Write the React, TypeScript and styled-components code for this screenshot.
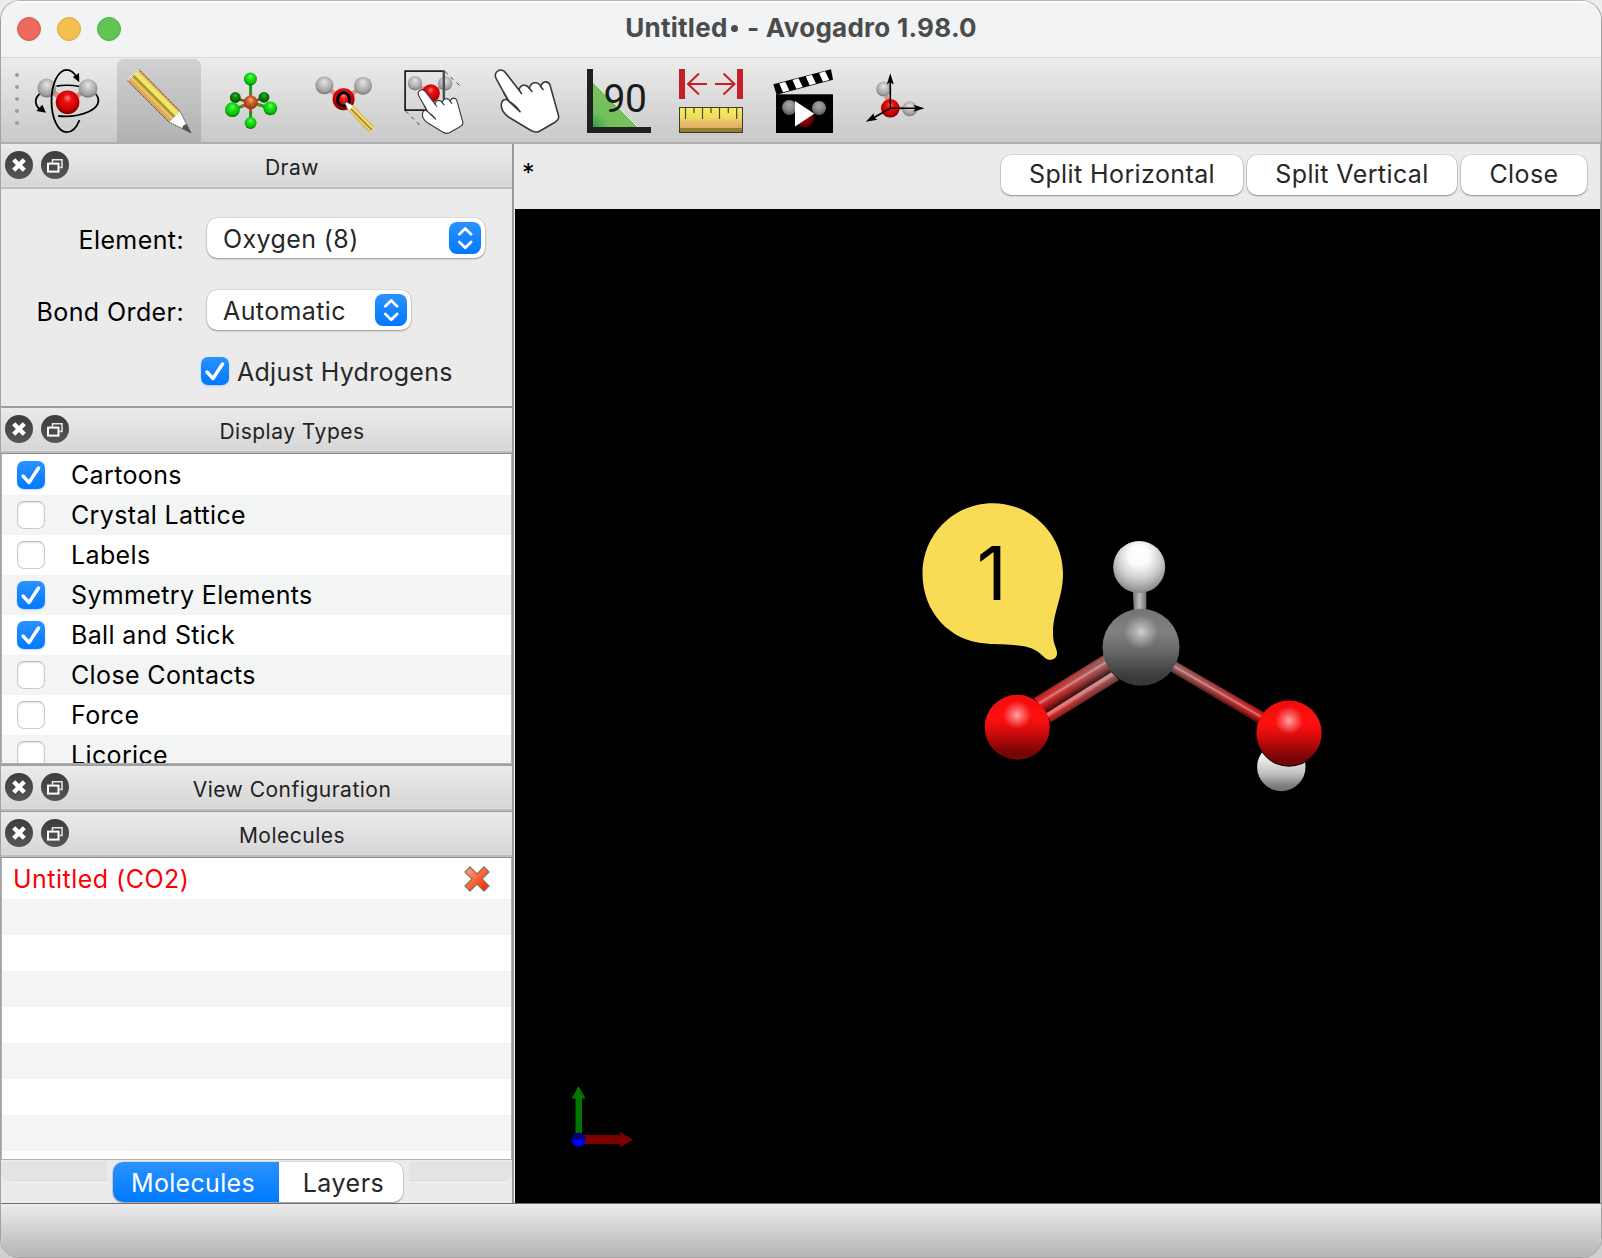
import React from 'react';
import styled, { createGlobalStyle, css } from 'styled-components';

const Global = createGlobalStyle`
  * { box-sizing: border-box; }
  body { margin: 0; background: #e6e6e6; }
`;

/* ---------- window chrome ---------- */

const Desktop = styled.div`
  width: 1602px;
  height: 1258px;
  background: linear-gradient(#ededed, #cfcfcf);
  font-family: Inter, "Liberation Sans", sans-serif;
  font-size: 25px;
  letter-spacing: 0.4px;
  line-height: 1.2;
  color: #000;
  white-space: nowrap;
`;

const AppWindow = styled.div`
  width: 1602px;
  height: 1258px;
  border: 1px solid #a3a3a3;
  border-top-color: #b5b5b7;
  border-radius: 20px;
  overflow: hidden;
  display: flex;
  flex-direction: column;
  background: #ebebeb;
`;

const TitleBar = styled.header`
  position: relative;
  height: 57px;
  flex: none;
  display: flex;
  align-items: center;
  justify-content: center;
  background: #f1f3f5;
  border-top: 2px solid #fafbfc;
  border-bottom: 1px solid #d6d8d9;
  padding-bottom: 5px;
`;

const TrafficLights = styled.div`
  position: absolute;
  left: 16px;
  top: 14px;
  display: flex;
  gap: 16px;
`;

const Light = styled.span<{ $fill: string; $edge: string }>`
  width: 24px;
  height: 24px;
  border-radius: 50%;
  background: ${(p) => p.$fill};
  border: 1px solid ${(p) => p.$edge};
`;

const WindowTitle = styled.h1`
  margin: 0;
  font-size: 26px;
  font-weight: 700;
  letter-spacing: 0.27px;
  color: #4a4c4c;
`;

const Dot = styled.span`
  display: inline-block;
  width: 7px;
  height: 7px;
  margin: 0 3px 5px 3px;
  border-radius: 50%;
  background: #4a4c4c;
  color: transparent;
  font-size: 5px;
  line-height: 7px;
  vertical-align: baseline;
  overflow: hidden;
`;

/* ---------- toolbar ---------- */

const Toolbar = styled.nav`
  height: 86px;
  flex: none;
  display: flex;
  align-items: stretch;
  padding-top: 1px;
  background: linear-gradient(#ececec, #c9c9c9);
  border-bottom: 2px solid #adadad;
`;

const Grip = styled.div`
  width: 24px;
  display: flex;
  flex-direction: column;
  align-items: center;
  gap: 8px;
  padding: 14px 0 0 8px;
`;

const GripDot = styled.i`
  width: 4px;
  height: 4px;
  border-radius: 50%;
  background: #9c9c9c;
`;

const Tool = styled.button<{ $active?: boolean }>`
  width: 84px;
  margin-right: 8px;
  padding: 10px 0 0;
  border: 0;
  display: flex;
  justify-content: center;
  align-items: flex-start;
  background: none;
  ${(p) =>
    p.$active &&
    css`
      border-radius: 7px 7px 0 0;
      background: linear-gradient(#d1d1d1, #b1b1b1);
    `}
  svg {
    display: block;
    overflow: visible;
  }
`;

/* ---------- layout ---------- */

const Body = styled.div`
  flex: 1;
  display: flex;
  min-height: 0;
`;

const Sidebar = styled.aside`
  width: 513px;
  flex: none;
  display: flex;
  flex-direction: column;
  border-right: 2px solid #9a9a9c;
`;

const DockHeader = styled.div`
  height: 45px;
  flex: none;
  display: flex;
  align-items: flex-start;
  gap: 8px;
  padding: 7px 0 0 4px;
  background: linear-gradient(#ebebeb, #d6d6d6);
  border-bottom: 2px solid #bebebe;
  box-shadow: inset 0 -1px 0 #dcdcdc;
`;

const DockTitle = styled.h2`
  flex: 1;
  margin: 4px 0 0 -5px;
  text-align: center;
  font-size: 21px;
  line-height: 26px;
  font-weight: 400;
  letter-spacing: 0.5px;
  color: #222;
`;

const DockButton = styled.button`
  width: 28px;
  height: 28px;
  padding: 0;
  border: 0;
  border-radius: 50%;
  background: linear-gradient(#3c3c3c, #565656);
  svg {
    display: block;
  }
`;

/* ---------- draw form ---------- */

const DrawForm = styled.div`
  height: 219px;
  flex: none;
  display: grid;
  grid-template-columns: 183px auto;
  grid-template-rows: 40px 40px 28px;
  column-gap: 23px;
  row-gap: 32px;
  align-items: center;
  justify-content: start;
  padding-top: 29px;
  border-bottom: 2px solid #9d9d9d;
`;

const FieldLabel = styled.label`
  justify-self: end;
  padding-top: 3px;
`;

const blue = 'linear-gradient(#2b92ff, #0079ff)';

const Combo = styled.div<{ $width: number }>`
  width: ${(p) => p.$width}px;
  height: 40px;
  display: flex;
  align-items: center;
  justify-content: space-between;
  padding: 0 4px 0 16px;
  border-radius: 10px;
  background: #fff;
  color: #272727;
  box-shadow: 0 0 0 0.5px rgba(0, 0, 0, 0.12), 0 1px 2px rgba(0, 0, 0, 0.32);
`;

const ComboValue = styled.span`
  padding-top: 2px;
`;

const Stepper = styled.span`
  width: 32px;
  height: 32px;
  border-radius: 8px;
  background: ${blue};
  svg {
    display: block;
  }
`;

const CheckField = styled.label`
  grid-column: 2;
  display: flex;
  align-items: center;
  gap: 9px;
  margin: -10px 0 0 -6px;
  letter-spacing: 0.28px;
  color: #272727;
`;

const CheckText = styled.span`
  padding-top: 2px;
  margin-left: -1px;
`;

const CheckBox = styled.span<{ $on?: boolean }>`
  width: 28px;
  height: 28px;
  flex: none;
  border-radius: 7px;
  ${(p) =>
    p.$on
      ? css`
          background: ${blue};
          box-shadow: 0 1px 2px rgba(0, 100, 255, 0.25);
        `
      : css`
          background: #fff;
          border: 1px solid #cbcbcb;
          border-top-color: #b9b9b9;
          box-shadow: inset 0 1px 2px rgba(0, 0, 0, 0.12);
        `}
  svg {
    display: block;
  }
`;

/* ---------- lists ---------- */

const ListBox = styled.ul<{ $height: number }>`
  height: ${(p) => p.$height}px;
  flex: none;
  margin: 0;
  padding: 1px 0 0;
  list-style: none;
  overflow: hidden;
  background: #fff;
  border: 1px solid #b0b0b0;
  border-top-color: #8c8c8c;
`;

const TypeRow = styled.li`
  height: 40px;
  display: flex;
  align-items: center;
  gap: 26px;
  padding-left: 15px;
  letter-spacing: 0.36px;
  &:nth-child(even) {
    background: #f3f5f5;
  }
`;

const ListEdge = styled.div`
  height: 2px;
  flex: none;
  background: #a0a0a0;
`;

const HeaderGap = styled.div`
  height: 1px;
  flex: none;
  background: #9a9a9a;
`;

const MoleculeRow = styled.li`
  height: 36px;
  display: flex;
  align-items: center;
  justify-content: space-between;
  padding: 0 21px 0 11px;
  color: #fb0007;
  &:first-child {
    height: 40px;
    letter-spacing: 0.48px;
  }
  &:nth-child(even) {
    background: #f3f5f5;
  }
`;

/* ---------- tabs ---------- */

const TabStrip = styled.div`
  height: 43px;
  display: flex;
  align-items: flex-start;
  padding-top: 1px;
`;

const StripEnd = styled.div<{ $side: 'left' | 'right' }>`
  flex: ${(p) => (p.$side === 'left' ? '0 0 106px' : '1')};
  height: 20px;
  background: #e4e4e4;
  border-bottom: 1px solid #d9d9d9;
  border-radius: ${(p) => (p.$side === 'left' ? '0 0 0 10px' : '0 0 10px 0')};
`;

const Segmented = styled.div`
  display: flex;
  height: 40px;
  margin: 1px 6px 0;
  border-radius: 10px;
  background: #fff;
  box-shadow: 0 0 0 0.5px rgba(0, 0, 0, 0.12), 0 1px 2px rgba(0, 0, 0, 0.32);
`;

const Segment = styled.button<{ $active?: boolean; $width: number }>`
  width: ${(p) => p.$width}px;
  padding: ${(p) => (p.$active ? '2px 6px 0 0' : '2px 0 0 5px')};
  border: 0;
  font: inherit;
  letter-spacing: ${(p) => (p.$active ? '0.3px' : '0.5px')};
  color: ${(p) => (p.$active ? '#fff' : '#272727')};
  background: ${(p) => (p.$active ? blue : 'none')};
  border-radius: ${(p) => (p.$active ? '10px 0 0 10px' : '0 10px 10px 0')};
`;

/* ---------- view ---------- */

const MainView = styled.main`
  flex: 1;
  display: flex;
  flex-direction: column;
  min-width: 0;
  border-left: 1px solid #f2f2f2;
  border-right: 1px solid #b4b4b4;
`;

const ViewBar = styled.div`
  height: 65px;
  flex: none;
  display: flex;
  align-items: flex-start;
  gap: 4px;
  padding: 11px 13px 0 7px;
`;

const ModifiedMark = styled.span`
  flex: 1;
  color: #000;
  line-height: 36px;
`;

const PushButton = styled.button<{ $width: number }>`
  width: ${(p) => p.$width}px;
  height: 40px;
  padding: 0 0 2px;
  border: 0;
  border-radius: 10px;
  background: #fff;
  font: inherit;
  letter-spacing: 0.4px;
  color: #272727;
  box-shadow: 0 0 0 0.5px rgba(0, 0, 0, 0.14), 0 1px 2px rgba(0, 0, 0, 0.34);
`;

const Canvas3D = styled.svg`
  display: block;
  flex: none;
  width: 1085px;
  height: 994px;
  background: #000;
`;

const StatusBar = styled.footer`
  height: 54px;
  flex: none;
  border-top: 1px solid #6f6f6f;
  background: linear-gradient(#ececec, #b5b5b5);
`;

const SharedPaints = styled.svg`
  position: absolute;
  width: 0;
  height: 0;
`;

/* ---------- drawings ---------- */

const Shade = ({ id, stops }: { id: string; stops: [number, string][] }) => (
  <radialGradient id={id} cx="0.5" cy="0.42" r="0.6" fx="0.5" fy="0.3">
    {stops.map(([o, c]) => (
      <stop key={o} offset={o} stopColor={c} />
    ))}
  </radialGradient>
);

const Defs = () => (
  <SharedPaints aria-hidden>
    <defs>
      <Shade id="white" stops={[[0, '#e6e6e6'], [0.35, '#c6c6c6'], [0.75, '#a2a2a2'], [1, '#6c6c6c']]} />
      <Shade id="red" stops={[[0, '#ff8585'], [0.3, '#ee1111'], [0.7, '#cc0000'], [1, '#6e0000']]} />
      <Shade id="darkred" stops={[[0, '#a01010'], [0.7, '#7a0000'], [1, '#4a0000']]} />
      <Shade id="gray" stops={[[0, '#a8a8a8'], [0.6, '#868686'], [1, '#525252']]} />
      <Shade id="green" stops={[[0, '#8dff8d'], [0.3, '#1bea1b'], [0.7, '#0cc40c'], [1, '#056c05']]} />
      <Shade id="darkgreen" stops={[[0, '#3fae3f'], [0.4, '#078c07'], [1, '#034203']]} />
      <Shade id="brown" stops={[[0, '#ffb088'], [0.4, '#d0632d'], [1, '#7c3211']]} />
      <linearGradient id="wood" gradientUnits="userSpaceOnUse" x1="12" y1="0" x2="0.5" y2="11.5">
        <stop offset="0" stopColor="#d9a35a" />
        <stop offset="0.12" stopColor="#e0b05c" />
        <stop offset="0.2" stopColor="#f3ea66" />
        <stop offset="0.44" stopColor="#efe460" />
        <stop offset="0.5" stopColor="#948534" />
        <stop offset="0.6" stopColor="#b9a544" />
        <stop offset="0.7" stopColor="#efd15e" />
        <stop offset="0.78" stopColor="#e6b062" />
        <stop offset="1" stopColor="#d8a258" />
      </linearGradient>
      <linearGradient id="ruler" x1="0" y1="0" x2="0" y2="1">
        <stop offset="0" stopColor="#f4ee62" />
        <stop offset="0.4" stopColor="#eedc60" />
        <stop offset="0.6" stopColor="#e8bd68" />
        <stop offset="0.82" stopColor="#e2ae62" />
        <stop offset="0.83" stopColor="#8f812f" />
        <stop offset="1" stopColor="#8f812f" />
      </linearGradient>
      <radialGradient id="angle" cx="0" cy="1" r="0.75">
        <stop offset="0" stopColor="#2b9c4c" />
        <stop offset="0.45" stopColor="#72bf5b" />
        <stop offset="1" stopColor="#76c15c" />
      </radialGradient>
    </defs>
  </SharedPaints>
);

const Icon = ({ children }: { children: React.ReactNode }) => (
  <svg width="64" height="64" viewBox="0 0 64 64" fill="none">
    {children}
  </svg>
);

const Ball = ({ x, y, r, k }: { x: number; y: number; r: number; k: string }) => (
  <circle cx={x} cy={y} r={r} fill={`url(#${k})`} />
);

const NavigateIcon = () => (
  <Icon>
    <path d="M14 21L29 30" stroke="#d98a8a" strokeWidth="5" />
    <path d="M51 21L37 30" stroke="#d98a8a" strokeWidth="5" />
    <Ball x={11.8} y={19} r={9.4} k="white" />
    <path d="M21.5 17.2Q32 15.2 45 17.5" stroke="#000" strokeWidth="1.7" />
    <Ball x={53} y={19.3} r={9.4} k="white" />
    <Ball x={32.6} y={33.3} r={11.8} k="red" />
    <path d="M44.5 51C41.5 59 36.5 63.2 31.8 63.2C23.2 63.2 16.5 49.5 16.5 32C16.5 14.5 23.2 .8 31.8 .8C36 .8 39 3.5 41.5 8" stroke="#000" strokeWidth="1.8" />
    <path d="M44.3 13.2L37.8 8L44 4Z" fill="#000" />
    <path d="M60.8 25C66.5 32 62.5 39 53 43C45 46.5 34 48 23.2 47" stroke="#000" strokeWidth="1.8" />
    <path d="M4.5 25C-.5 29.5 -.5 35.5 4.5 40" stroke="#000" strokeWidth="1.8" />
    <path d="M11 43.7L1.3 42L7.300 35.800Z" fill="#000" />
  </Icon>
);

const DrawIcon = () => (
  <Icon>
    <path d="M53 42.3L42 53L63.8 63.8Z" fill="#fff" />
    <path d="M55.3 59.6Q55 56 59.5 55.3L63.8 63.8Z" fill="#555" />
    <path d="M12 .3L53 42.3L42 53L.3 11.5Z" fill="url(#wood)" />
    <path d="M12 .3L53 42.3L63.8 63.8L42 53L.3 11.5Z" stroke="#222" strokeWidth="0.8" strokeDasharray="1.5 0.8" />
    <path d="M12 .3L.3 11.5" stroke="#fff" strokeWidth="1.5" />
    <path d="M12 .3L.3 11.5" stroke="#444" strokeWidth="0.6" strokeDasharray="1.5 1" />
  </Icon>
);

const TemplateIcon = () => (
  <Icon>
    <path d="M31.6 14V28" stroke="#12a012" strokeWidth="3" />
    <path d="M31.6 24V45" stroke="#b5532a" strokeWidth="3" />
    <path d="M31.6 43V50" stroke="#12a012" strokeWidth="3" />
    <path d="M18 30L31 33M45 29L32 33" stroke="#8a4a20" strokeWidth="2.5" />
    <Ball x={16.3} y={28.5} r={5.4} k="darkgreen" />
    <Ball x={45} y={28.3} r={5.4} k="darkgreen" />
    <path d="M14 40.5L24 37" stroke="#10b010" strokeWidth="3.2" />
    <path d="M23 37.3L32 33.5L41 36" stroke="#c45a2a" strokeWidth="3.2" />
    <path d="M40 35.7L50 39" stroke="#10b010" strokeWidth="3.2" />
    <Ball x={31.4} y={10} r={6.5} k="green" />
    <Ball x={31.6} y={54} r={5.9} k="green" />
    <Ball x={31.7} y={33.4} r={7} k="brown" />
    <Ball x={13.4} y={40.7} r={7.4} k="green" />
    <Ball x={51.3} y={39.3} r={6.9} k="green" />
  </Icon>
);

const LabelIcon = () => (
  <Icon>
    <path d="M15 18L28 28M50 18L37 28" stroke="#dc8f8f" strokeWidth="4.5" />
    <Ball x={13.4} y={16.3} r={9} k="white" />
    <Ball x={52} y={16.7} r={9} k="white" />
    <Ball x={32.6} y={30.3} r={11} k="red" />
    <ellipse cx="32.6" cy="30.5" rx="6" ry="6.7" stroke="#000" strokeWidth="3.1" />
    <path d="M32.8 31.5L42.6 37.2L37.8 42.3Z" fill="#fff" stroke="#999" strokeWidth="0.5" />
    <path d="M32.8 31.5L35.6 33.1L34.3 34.6Z" fill="#222" />
    <path d="M42.6 37.2L63.3 58L58 63.3L37.8 42.3Z" fill="#e0a858" />
    <path d="M41.3 38.7L62 59.4" stroke="#f3e65f" strokeWidth="2" />
    <path d="M40 40L60.8 60.8" stroke="#8d7f33" strokeWidth="1.2" />
    <path d="M38.9 41.1L59.5 62" stroke="#efd860" strokeWidth="1.5" />
  </Icon>
);

const Hand = () => (
  <>
    <path
      d="M13.3 31.7L1.3 9.8C-2.5 2.5 6.5 -2.2 10.8 4L24 21C25.2 15.5 31 14.5 34.3 19.2C36 12.5 43 12 45.7 17.5C47.5 11.5 53.3 11.7 55 16L63.5 46.5C64.2 49.5 63 51.2 60.8 52.7L44.5 62.2C41.5 63.6 38.5 63 35.5 61.3L13.5 48C9 44.5 6.3 41.5 6.3 36.8C6.3 30.5 10 29.2 13.3 31.7Z"
      fill="#fff"
      stroke="#3a3a3a"
      strokeWidth="1.6"
      strokeLinejoin="round"
    />
    <path d="M9 24L13.300 31.700C17.5 34.5 22 38 25 42.7L13.300 31.700M13.3 31.7L25 42.7M24 21L26.5 24.5M34.3 19.2L37 22.5M45.7 17.5L48 20.5" stroke="#3a3a3a" strokeWidth="1.6" strokeLinecap="round" strokeLinejoin="round" />
  </>
);

const SelectIcon = () => (
  <Icon>
    <path d="M42 2.5L57.5 17.5M2.5 42L17 56.5" stroke="#444" strokeWidth="1" strokeDasharray="4 4" />
    <path d="M13 15L27 24M41 15L30 24" stroke="#dc8f8f" strokeWidth="3.5" />
    <Ball x={12} y={14.2} r={7.2} k="white" />
    <Ball x={42.2} y={14.5} r={7.2} k="white" />
    <Ball x={27.8} y={24.3} r={9} k="red" />
    <rect x="2.1" y="2.1" width="38.8" height="39" stroke="#000" strokeWidth="1.5" />
    <path d="M40.8 2V30" stroke="#555" strokeWidth="2.6" opacity="0.8" />
    <g transform="translate(15 20) scale(0.705)">
      <Hand />
    </g>
  </Icon>
);

const ManipulateIcon = () => (
  <Icon>
    <Hand />
  </Icon>
);

const AngleIcon = () => (
  <Icon>
    <path d="M6 13L51.5 58.5H6Z" fill="url(#angle)" />
    <path d="M6 13L51.5 58.5" stroke="#f4f7f0" strokeWidth="1" />
    <path d="M3 0V61H64" stroke="#231f20" strokeWidth="6" />
    <text x="16.5" y="43" fontFamily="Roboto, sans-serif" fontSize="39" letterSpacing="-0.5" fill="#1c1c1c">90</text>
  </Icon>
);

const MeasureIcon = () => (
  <Icon>
    <path d="M3 0V30M61 0V30" stroke="#c4202b" strokeWidth="6" />
    <path d="M28 15H9M20 4.5L9 15L20 25.5M36 15H55M44.5 4.5L55.5 15L44.5 25.5" stroke="#c4202b" strokeWidth="2" />
    <rect x="0.5" y="38.5" width="63" height="25" fill="url(#ruler)" stroke="#3d3d2c" strokeWidth="1" />
    <path d="M6.5 38.5V50M23.5 38.5V50M40.5 38.5V50M57.7 38.5V50M15 38.5V44M32 38.5V44M49.3 38.5V44" stroke="#4a4520" strokeWidth="1.2" />
  </Icon>
);

const AnimationIcon = () => (
  <Icon>
    <rect x="5" y="25.3" width="57" height="38.7" fill="#000" />
    <path d="M2.3 15.3L60 .3L62 10.8L5.5 25.8Z" fill="#000" />
    <path d="M8.2 14.4L14.2 12.8L18.4 21.6L12 23.3ZM21.5 10.9L27.5 9.3L31.7 18.1L25.3 19.8ZM34.8 7.4L40.8 5.8L45 14.6L38.6 16.3ZM48.1 3.9L54.1 2.3L58.3 11.1L51.9 12.8Z" fill="#fff" />
    <Ball x={18.4} y={38.5} r={7.4} k="gray" />
    <Ball x={48} y={39} r={7.1} k="gray" />
    <Ball x={33.3} y={49} r={9.5} k="darkred" />
    <path d="M24 32V57.5L43.3 44.7Z" fill="#fff" />
  </Icon>
);

const AlignIcon = () => (
  <Icon>
    <Ball x={20.7} y={20} r={7.5} k="white" />
    <path d="M23 27L26 33" stroke="#e08a8a" strokeWidth="4.5" />
    <path d="M35 39.3H42" stroke="#d98a8a" strokeWidth="3.5" />
    <Ball x={46.7} y={39.8} r={7.5} k="white" />
    <Ball x={27.3} y={39.3} r={9.3} k="red" />
    <path d="M27.3 39.3V9M27.3 39.3H56M27.3 39.3L8 50.3" stroke="#000" strokeWidth="1.6" />
    <path d="M27.3 4.3L30.8 15.5L27.3 13.2L23.8 15.5ZM61.5 39.3L50.5 42.8L52.8 39.3L50.5 35.8ZM2.8 52.8L10.7 44.3L11 48.6L14.5 50.8Z" fill="#000" />
  </Icon>
);

const CloseGlyph = () => (
  <svg width="28" height="28" viewBox="0 0 28 28">
    <path d="M8.700 8.700L19.300 19.300M19.300 8.700L8.700 19.300" stroke="#fff" strokeWidth="4.4" />
  </svg>
);

const FloatGlyph = () => (
  <svg width="28" height="28" viewBox="0 0 28 28" fill="none">
    <path d="M11.5 12V8.8H21V16.5H18.5" stroke="#e8e8e8" strokeWidth="1.5" />
    <rect x="7" y="12.6" width="10.5" height="8" fill="#4a4a4a" stroke="#fff" strokeWidth="2" />
  </svg>
);

const CheckGlyph = () => (
  <svg width="28" height="28" viewBox="0 0 28 28" fill="none">
    <path d="M6 15L12 21.5L21.5 7" stroke="#fff" strokeWidth="3.4" strokeLinecap="round" strokeLinejoin="round" />
  </svg>
);

const ArrowsGlyph = () => (
  <svg width="32" height="32" viewBox="0 0 32 32" fill="none">
    <path d="M10.3 12.3L16.2 6.5L22.1 12.3M10.3 20L16.2 25.8L22.1 20" stroke="#fff" strokeWidth="2.7" strokeLinecap="round" strokeLinejoin="round" />
  </svg>
);

const RemoveGlyph = () => (
  <svg width="26" height="26" viewBox="0 0 26 26">
    <defs>
      <linearGradient id="remove" x1="0" y1="0" x2="1" y2="1">
        <stop offset="0.15" stopColor="#ff9478" />
        <stop offset="0.5" stopColor="#ff6236" />
        <stop offset="0.85" stopColor="#ff2d00" />
      </linearGradient>
    </defs>
    <path d="M6 1L13 8L20 1L25 6L18 13L25 20L20 25L13 18L6 25L1 20L8 13L1 6Z" fill="url(#remove)" stroke="#83775a" strokeWidth="1.3" />
  </svg>
);

const Molecule = () => (
  <Canvas3D viewBox="515 209 1085 994">
    <defs>
      <radialGradient id="mH" cx="0.5" cy="0.38" r="0.68" fx="0.5" fy="0.22">
        <stop offset="0" stopColor="#fff" />
        <stop offset="0.3" stopColor="#fbfbfb" />
        <stop offset="0.6" stopColor="#cfcfcf" />
        <stop offset="0.85" stopColor="#999" />
        <stop offset="1" stopColor="#707070" />
      </radialGradient>
      <linearGradient id="mH2" x1="0" y1="0.3" x2="0" y2="1">
        <stop offset="0" stopColor="#f0f0f0" />
        <stop offset="0.5" stopColor="#bdbdbd" />
        <stop offset="0.8" stopColor="#858585" />
        <stop offset="1" stopColor="#6e6e6e" />
      </linearGradient>
      <linearGradient id="mC" x1="0" y1="0" x2="0" y2="1">
        <stop offset="0" stopColor="#757575" />
        <stop offset="0.3" stopColor="#808080" />
        <stop offset="0.55" stopColor="#686868" />
        <stop offset="0.8" stopColor="#464646" />
        <stop offset="0.92" stopColor="#383838" />
        <stop offset="1" stopColor="#3a3a3a" />
      </linearGradient>
      <radialGradient id="shineC">
        <stop offset="0" stopColor="#fff" stopOpacity="0.62" />
        <stop offset="0.4" stopColor="#fff" stopOpacity="0.35" />
        <stop offset="1" stopColor="#fff" stopOpacity="0" />
      </radialGradient>
      <linearGradient id="mO" x1="0" y1="0" x2="0" y2="1">
        <stop offset="0" stopColor="#f20b0b" />
        <stop offset="0.35" stopColor="#ff1010" />
        <stop offset="0.55" stopColor="#d90c0c" />
        <stop offset="0.8" stopColor="#8e0707" />
        <stop offset="0.92" stopColor="#720505" />
        <stop offset="1" stopColor="#7c0606" />
      </linearGradient>
      <linearGradient id="bondL" gradientUnits="userSpaceOnUse" x1="1110" y1="662" x2="1038" y2="706">
        <stop offset="0" stopColor="#a66464" />
        <stop offset="1" stopColor="#e22020" />
      </linearGradient>
      <linearGradient id="bondR" gradientUnits="userSpaceOnUse" x1="1174" y1="667" x2="1262" y2="718">
        <stop offset="0" stopColor="#a86868" />
        <stop offset="1" stopColor="#e01c1c" />
      </linearGradient>
      <linearGradient id="roundUpper" gradientUnits="userSpaceOnUse" x1="1067.6" y1="676.2" x2="1078.4" y2="693.8">
        <stop offset="0" stopColor="#000" stopOpacity="0.35" />
        <stop offset="0.2" stopColor="#000" stopOpacity="0" />
        <stop offset="0.4" stopColor="#fff" stopOpacity="0.42" />
        <stop offset="0.56" stopColor="#400000" stopOpacity="0.1" />
        <stop offset="0.8" stopColor="#100000" stopOpacity="0.5" />
        <stop offset="1" stopColor="#000" stopOpacity="0.8" />
      </linearGradient>
      <linearGradient id="roundLower" gradientUnits="userSpaceOnUse" x1="1079.2" y1="694.4" x2="1085" y2="703.6">
        <stop offset="0" stopColor="#fff" stopOpacity="0.35" />
        <stop offset="0.15" stopColor="#fff" stopOpacity="0.3" />
        <stop offset="0.4" stopColor="#200000" stopOpacity="0.15" />
        <stop offset="1" stopColor="#000" stopOpacity="0.55" />
      </linearGradient>
      <linearGradient id="roundRight" gradientUnits="userSpaceOnUse" x1="1219.9" y1="687" x2="1214.1" y2="697">
        <stop offset="0" stopColor="#000" stopOpacity="0.35" />
        <stop offset="0.2" stopColor="#000" stopOpacity="0.05" />
        <stop offset="0.43" stopColor="#fff" stopOpacity="0.42" />
        <stop offset="0.65" stopColor="#200000" stopOpacity="0.15" />
        <stop offset="1" stopColor="#000" stopOpacity="0.6" />
      </linearGradient>
      <linearGradient id="bondH" x1="0" x2="1" y1="0" y2="0">
        <stop offset="0" stopColor="#6e6e6e" />
        <stop offset="0.5" stopColor="#bdbdbd" />
        <stop offset="1" stopColor="#6e6e6e" />
      </linearGradient>
    </defs>

    <path d="M1132.700 588.500H1146.3V612H1134Z" fill="url(#bondH)" />

    <path d="M1111 672L1119 680L1051 722L1045 712Z" fill="url(#bondL)" />
    <path d="M1111 672L1119 680L1051 722L1045 712Z" fill="url(#roundLower)" />
    <path d="M1104.500 654.500L1115 670L1046.500 713L1034 698Z" fill="url(#bondL)" />
    <path d="M1104.500 654.500L1115 670L1046.500 713L1034 698Z" fill="url(#roundUpper)" />

    <path d="M1175 661L1265 713L1258 723L1169 670.500Z" fill="url(#bondR)" />
    <path d="M1175 661L1265 713L1258 723L1169 670.500Z" fill="url(#roundRight)" />

    <circle cx="1139.200" cy="567" r="26" fill="url(#mH)" />
    <circle cx="1141" cy="647.200" r="38.5" fill="url(#mC)" />
    <circle cx="1141" cy="632" r="17" fill="url(#shineC)" />
    <circle cx="1017.200" cy="727.200" r="32.5" fill="url(#mO)" />
    <circle cx="1017" cy="715" r="14" fill="url(#shineC)" />
    <circle cx="1281.3" cy="767" r="24.2" fill="url(#mH2)" />
    <circle cx="1289" cy="733.9" r="32.8" fill="#1c0000" />
    <circle cx="1289" cy="733" r="32.6" fill="url(#mO)" />
    <circle cx="1289" cy="720.5" r="14" fill="url(#shineC)" />

    <path
      d="M992.7 503.200C1031.5 503.200 1063 534.5 1063 573.5C1063 598 1053 611 1053 633C1053 646 1057 647 1057 653.5C1057 659 1050.5 662 1045 658C1038 651 1032 647 1020 645.8C1006 644 1000 644.8 986 643.5C950 641.5 922.5 612 922.5 573.5C922.5 534.5 954 503.200 992.7 503.200Z"
      fill="#f9dc55"
    />
    <text x="976.8" y="600" fontFamily="Inter, sans-serif" fontSize="74" fill="#000">1</text>

    <path d="M575.500 1133.500V1098.500H571.7L578.500 1086L585.500 1098.500H582V1133.500Z" fill="#007600" />
    <path d="M584 1135H620V1132L633 1139.500L620 1147.500V1144H584Z" fill="#7b0000" />
    <ellipse cx="578.700" cy="1139.8" rx="6.7" ry="7" fill="#0000ff" />
    <path d="M572 1139.8A6.7 7 0 0 1 585.4 1139.8Z" fill="#000080" />
  </Canvas3D>
);

/* ---------- data ---------- */

const tools = [
  NavigateIcon, DrawIcon, TemplateIcon, LabelIcon, SelectIcon,
  ManipulateIcon, AngleIcon, MeasureIcon, AnimationIcon, AlignIcon,
];

const displayTypes: [string, boolean][] = [
  ['Cartoons', true],
  ['Crystal Lattice', false],
  ['Labels', false],
  ['Symmetry Elements', true],
  ['Ball and Stick', true],
  ['Close Contacts', false],
  ['Force', false],
  ['Licorice', false],
];

const Dock = ({ title }: { title: string }) => (
  <DockHeader>
    <DockButton aria-label="Close panel"><CloseGlyph /></DockButton>
    <DockButton aria-label="Float panel"><FloatGlyph /></DockButton>
    <DockTitle>{title}</DockTitle>
  </DockHeader>
);

const Select = ({ width, value }: { width: number; value: string }) => (
  <Combo $width={width}>
    <ComboValue>{value}</ComboValue>
    <Stepper><ArrowsGlyph /></Stepper>
  </Combo>
);

export default function App() {
  return (
    <Desktop>
      <Global />
      <Defs />
      <AppWindow>
        <TitleBar>
          <TrafficLights>
            <Light $fill="#ec695e" $edge="#d7574d" />
            <Light $fill="#f4bf4f" $edge="#dba73a" />
            <Light $fill="#61c554" $edge="#4fad42" />
          </TrafficLights>
          <WindowTitle>Untitled<Dot>•</Dot> - Avogadro 1.98.0</WindowTitle>
        </TitleBar>

        <Toolbar>
          <Grip>
            {[0, 1, 2, 3, 4].map((n) => <GripDot key={n} />)}
          </Grip>
          {tools.map((Drawing, n) => (
            <Tool key={n} $active={n === 1}><Drawing /></Tool>
          ))}
        </Toolbar>

        <Body>
          <Sidebar>
            <Dock title="Draw" />
            <DrawForm>
              <FieldLabel>Element:</FieldLabel>
              <Select width={278} value="Oxygen (8)" />
              <FieldLabel>Bond Order:</FieldLabel>
              <Select width={204} value="Automatic" />
              <CheckField>
                <CheckBox $on><CheckGlyph /></CheckBox>
                <CheckText>Adjust Hydrogens</CheckText>
              </CheckField>
            </DrawForm>

            <Dock title="Display Types" />
            <ListBox $height={311}>
              {displayTypes.map(([name, on]) => (
                <TypeRow key={name}>
                  <CheckBox $on={on}>{on && <CheckGlyph />}</CheckBox>
                  {name}
                </TypeRow>
              ))}
            </ListBox>
            <ListEdge />

            <Dock title="View Configuration" />
            <HeaderGap />
            <Dock title="Molecules" />
            <ListBox $height={303}>
              <MoleculeRow>Untitled (CO2)<RemoveGlyph /></MoleculeRow>
              {[1, 2, 3, 4, 5, 6, 7, 8].map((n) => <MoleculeRow key={n} />)}
            </ListBox>
            <TabStrip>
              <StripEnd $side="left" />
              <Segmented>
                <Segment $active $width={166}>Molecules</Segment>
                <Segment $width={124}>Layers</Segment>
              </Segmented>
              <StripEnd $side="right" />
            </TabStrip>
          </Sidebar>

          <MainView>
            <ViewBar>
              <ModifiedMark>*</ModifiedMark>
              <PushButton $width={242}>Split Horizontal</PushButton>
              <PushButton $width={210}>Split Vertical</PushButton>
              <PushButton $width={126}>Close</PushButton>
            </ViewBar>
            <Molecule />
          </MainView>
        </Body>

        <StatusBar />
      </AppWindow>
    </Desktop>
  );
}
